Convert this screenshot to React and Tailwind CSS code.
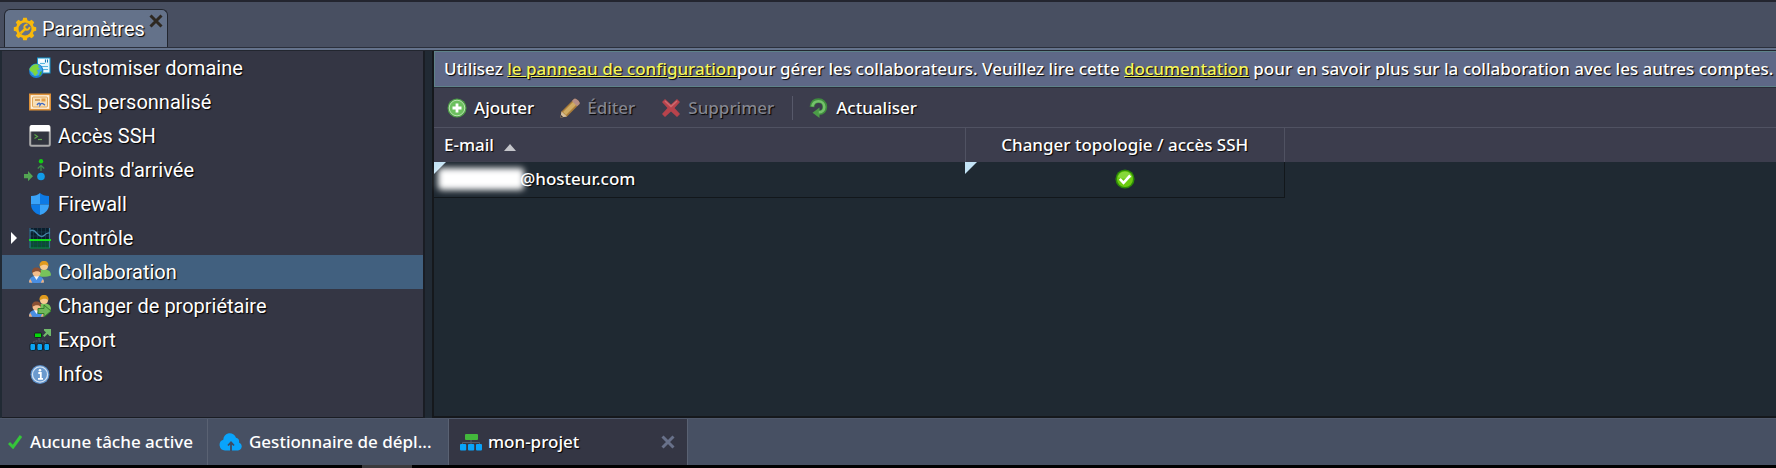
const SHADOW = "[text-shadow:1px_1px_1px_#000]";

function Svg({ children, box = "0 0 22 22", className = "size-[22px]" }) {
  return (
    <svg viewBox={box} className={`shrink-0 ${className}`} aria-hidden="true">
      {children}
    </svg>
  );
}

function GearIcon() {
  return (
    <Svg box="0 0 24 24" className="size-6">
      <g fill="#f9b90a">
        {[0, 45, 90, 135, 180, 225, 270, 315].map((a) => (
          <path key={a} d="M9.200 4.500L10.200 0.800h3.600l1 3.700z" transform={`rotate(${a} 12 12)`} />
        ))}
      </g>
      <circle cx="12" cy="12" r="7.800" fill="none" stroke="#f9b90a" strokeWidth="2.600" />
      <path d="M8.300 15.700l3.900-3.900" stroke="#f9b90a" strokeWidth="2.600" strokeLinecap="round" />
      <path d="M14.600 7.600a2.600 2.600 0 1 0 1.900 2.200" fill="none" stroke="#f9b90a" strokeWidth="1.900" />
    </Svg>
  );
}

function DomainIcon() {
  return (
    <Svg>
      <rect x="8" y="0.500" width="13.500" height="16" fill="#1596cf" />
      <rect x="9" y="1.500" width="11.500" height="14" fill="#e4f5fc" />
      <path d="M11 3.500h4" stroke="#fff" strokeWidth="2.400" />
      <path d="M11 6.500h5M11 9.500h8M11 12.500h8" stroke="#58b7dd" strokeWidth="1" />
      <path d="M16.500 2.500v3M18.500 2.500v3" stroke="#1779b4" strokeWidth="1" />
      <circle cx="7.200" cy="13.800" r="7.200" fill="#1c7fd0" />
      <circle cx="7" cy="13" r="6" fill="#3ea6ea" />
      <path d="M3 9c2-2 5-2.500 7-1l-1 2 2 2-3 1 1 3-3 3c-2-1-1-3-3-4s-3-2-2.500-3.500z" fill="#7ed63d" />
      <path d="M11 15l2-1-1 4-2 1z" fill="#4fb52b" />
    </Svg>
  );
}

function CertificateIcon() {
  return (
    <Svg>
      <rect x="0.800" y="3.300" width="20.400" height="15.400" fill="#fdf0da" stroke="#dd9138" strokeWidth="1.600" />
      <rect x="3.500" y="6" width="15" height="10" rx="1" fill="#f8dfb6" stroke="#e0a75c" strokeWidth="1" />
      <path d="M6 9h5" stroke="#c9873a" strokeWidth="1.400" />
      <rect x="12.500" y="7.500" width="4" height="3" fill="#e2a04a" />
      <path d="M8 14c2-3 3-2 3 0 2-3 3-1 5 0" fill="none" stroke="#3d68c4" strokeWidth="1.400" />
    </Svg>
  );
}

function TerminalIcon() {
  return (
    <Svg>
      <rect x="1.200" y="1.200" width="19.600" height="19.600" rx="1.500" fill="#32353f" stroke="#aaa" strokeWidth="2" />
      <path d="M1 1.500a1.500 1.500 0 0 1 1.500-1.500h17a1.500 1.500 0 0 1 1.500 1.500V6.500H1z" fill="#fff" />
      <path d="M5.500 9.500l3 2-3 2" fill="none" stroke="#5aa648" strokeWidth="1.200" />
      <path d="M9 14.500h4" stroke="#5aa648" strokeWidth="1.200" />
    </Svg>
  );
}

function EndpointsIcon() {
  return (
    <Svg box="0 0 27 22" className="h-[22px] w-[27px]">
      <path d="M0 15h4v-3l5 5.200-5 5v-3H0z" fill="#53a552" />
      <circle cx="17" cy="2.200" r="2.200" fill="#12d012" />
      <path d="M17 12V7M13.800 9.500L17 6.300l3.200 3.200" fill="none" stroke="#3f8f4b" strokeWidth="1.300" />
      <circle cx="17" cy="17.500" r="3.800" fill="#119ce8" />
    </Svg>
  );
}

function ShieldIcon() {
  return (
    <Svg>
      <path d="M11 0v11.500H2V3C6 3 9 2 11 0z" fill="#3aa3f8" />
      <path d="M11 0v11.500h9V3c-4 0-7-1-9-3z" fill="#0d7ae5" />
      <path d="M11 22V11.500H2c0 5 3.500 9 9 10.500z" fill="#0d7ae5" />
      <path d="M11 22V11.500h9c0 5-3.500 9-9 10.500z" fill="#3aa3f8" />
    </Svg>
  );
}

function MonitorIcon() {
  return (
    <Svg>
      <rect x="0.500" y="1" width="20.500" height="20" fill="#0b1d2c" />
      <rect x="0.500" y="13" width="20.500" height="8.500" fill="#07502f" />
      <path d="M4.500 1v20M8.500 1v20M12.500 1v20M16.500 1v20M1 5h20M1 9h20M1 17h20" stroke="#1c4455" strokeWidth="0.600" />
      <path d="M1 21V1M20.500 21V1" stroke="#397194" strokeWidth="1.200" />
      <path d="M1 4c3-2 5 0 7 2.500s5 4 7 2 4-3 6-2.500" fill="none" stroke="#4284a9" strokeWidth="1.400" />
      <path d="M0 13h22" stroke="#12f019" strokeWidth="1.800" />
      <path d="M1 21h20" stroke="#0f8b4a" strokeWidth="1" />
    </Svg>
  );
}

function PeopleShapes() {
  return (
    <>
      <path d="M8.500 15c0-5 2.500-6.500 6.500-6.500S22 10 22 14.500c-3 1.500-10 1.800-13.500.5z" fill="#78c25b" />
      <circle cx="15" cy="5" r="4" fill="#f7cb91" />
      <path d="M10.600 5.500C10 2 12 0 15 0s5 2 4.400 5.500C18 3.500 14 3 10.600 5.500z" fill="#e09a1d" />
      <path d="M0 21.500c0-5 3-6.500 7.500-6.500s7.500 1.500 7.500 6.500c-4 .7-11 .7-15 0z" fill="#4a8fe3" />
      <path d="M5 15l2.500 4 2.500-4z" fill="#f2f5fa" />
      <path d="M0 21.600c0-1.600.5-2.600 1.300-3.600l2 3.800zM15 21.600c0-1.600-.5-2.600-1.300-3.600l-2 3.800z" fill="#f0b07c" />
      <circle cx="7.500" cy="11.500" r="4" fill="#f3bd8c" />
      <path d="M3.100 12C2.500 8.500 4.500 6.500 7.500 6.500s5 2 4.400 5.500C10.500 10 6.500 9.500 3.100 12z" fill="#8a5034" />
    </>
  );
}

function PeopleIcon() {
  return (
    <Svg>
      <PeopleShapes />
    </Svg>
  );
}

function TransferIcon() {
  return (
    <Svg>
      <PeopleShapes />
      <path d="M9 13.500h6V10l7 6-7 6v-3.500H9z" fill="#6fb95a" stroke="#357f2c" strokeWidth="1" />
    </Svg>
  );
}

function ExportIcon() {
  return (
    <Svg>
      <rect x="5.500" y="4" width="7" height="4.500" rx="1" fill="#06d60a" stroke="#101418" strokeWidth="0.800" />
      <path d="M10 9v2.500M4 13.500l2-1.500h9l2 1.500" fill="none" stroke="#5a6270" strokeWidth="1" strokeDasharray="2 1" />
      <g fill="#0ba5f5" stroke="#101418" strokeWidth="0.800">
        <rect x="1" y="14.500" width="5.500" height="7" rx="1.500" />
        <rect x="8" y="14.500" width="5.500" height="7" rx="1.500" />
        <rect x="15" y="14.500" width="5.500" height="7" rx="1.500" />
      </g>
      <path d="M14 6.500l3-3L15 1.500V0h7v7h-1.500l-2-2-3 3z" fill="#71b96b" />
    </Svg>
  );
}

function InfoIcon() {
  return (
    <Svg>
      <circle cx="11" cy="11.500" r="9.500" fill="#5b8fc9" />
      <circle cx="11" cy="11.500" r="7.600" fill="#6b9ace" stroke="#d5e3f2" strokeWidth="1.300" />
      <path d="M9.300 10h2.500v5.500M9 15.800h5" fill="none" stroke="#fff" strokeWidth="1.800" />
      <circle cx="11" cy="7.300" r="1.300" fill="#fff" />
    </Svg>
  );
}

function AddIcon() {
  return (
    <Svg box="0 0 20 20" className="size-5">
      <circle cx="10" cy="10" r="9.500" fill="#4f9d49" />
      <circle cx="10" cy="10" r="7.800" fill="#6cc05e" stroke="#b9e3b0" strokeWidth="1" />
      <path d="M10 5.500v9M5.500 10h9" stroke="#fff" strokeWidth="2.800" />
    </Svg>
  );
}

function PencilIcon() {
  return (
    <Svg box="0 0 20 20" className="size-5">
      <path d="M0.500 19.500L1.500 13.500 14 1c1.500-1.500 6.500 2.500 5.500 5L7 18.500z" fill="#a97c3a" />
      <path d="M3 14L14 3l3 3L6 17z" fill="#d0ab62" />
      <path d="M14 1c1.500-1.500 6.500 2.500 5.500 5L17 8.300 12 3z" fill="#b58e86" />
      <path d="M1.500 13.500L7 18.500l-6.500 1z" fill="#d6bf9a" />
      <path d="M.500 19.500l.6-2.600 2 2.100z" fill="#3a3434" />
    </Svg>
  );
}

function DeleteIcon() {
  return (
    <Svg box="0 0 20 20" className="size-5">
      <path d="M4 1l6 5.500L16 1l3 3-5.500 6 5.500 6-3 3-6-5.500L4 19l-3-3 5.500-6L1 4z" fill="#b8434c" />
      <path d="M4 3l6 5.500L16 3" fill="none" stroke="#cd6b70" strokeWidth="1.500" />
    </Svg>
  );
}

function RefreshIcon() {
  return (
    <Svg box="0 0 20 20" className="size-5">
      <path d="M3 9C3.500 5 6 2.700 9.500 2.700c3.700 0 6.300 2.600 6.300 6.200 0 3.400-2.300 5.800-5.800 5.800" fill="none" stroke="#3f8d3e" strokeWidth="4.800" />
      <path d="M10.500 9.500V20l-7-5.300z" fill="#4b9c47" />
      <path d="M3.300 8.500C4 5 6.500 3.200 9.500 3.200c3.300 0 5.800 2.400 5.800 5.700 0 3.100-2.300 5.300-5.500 5.300" fill="none" stroke="#74c16b" strokeWidth="2.600" />
    </Svg>
  );
}

function EnabledIcon() {
  return (
    <svg viewBox="0 0 20 20" className="mx-auto size-5" role="img" aria-label="Oui">
      <circle cx="10" cy="10" r="9.600" fill="#2c8a08" />
      <circle cx="10" cy="10" r="8" fill="#6ccb10" />
      <path d="M3 8a7.300 7.300 0 0 1 14 0c-4 2-10 2-14 0z" fill="#86d83a" />
      <path d="M4.800 9.800l3.700 4 6.700-7.300" fill="none" stroke="#fff" strokeWidth="2.600" />
    </svg>
  );
}

function TaskIcon() {
  return (
    <Svg box="0 0 14 14" className="size-[14px]">
      <path d="M1 8l4 4L13 1" fill="none" stroke="#35c53a" strokeWidth="3" />
    </Svg>
  );
}

function CloudIcon() {
  return (
    <Svg box="0 0 24 18" className="h-[18px] w-6">
      <path d="M6 17.500a5.500 5.500 0 0 1-1.700-10.700A6.500 6.500 0 0 1 17 4.800a4 4 0 0 1 3 4.600 4.200 4.200 0 0 1-1 8.100z" fill="#09a4fb" />
      <path d="M12 18v-8M9 12.500l3-3.200 3 3.200" fill="none" stroke="#3f4b62" strokeWidth="1.800" />
    </Svg>
  );
}

function TopologyIcon() {
  return (
    <Svg box="0 0 22 18" className="h-[18px] w-[22px]">
      <rect x="5" y="1" width="13" height="6" rx="1" fill="#43b83c" />
      <path d="M11 7v4M2.500 12V9.500h17V12" fill="none" stroke="#565b6b" strokeWidth="1" />
      <rect x="0" y="11" width="6.200" height="6.500" rx="1" fill="#09a4fb" />
      <rect x="8" y="11" width="6.200" height="6.500" rx="1" fill="#09a4fb" />
      <rect x="16" y="11" width="6" height="6.500" rx="1" fill="#09a4fb" />
    </Svg>
  );
}

function CloseIcon({ className }) {
  return (
    <Svg box="0 0 14 14" className={className}>
      <path d="M1.500 1.500l11 11M12.500 1.500l-11 11" stroke="currentColor" strokeWidth="3" />
    </Svg>
  );
}

const MENU = [
  { label: "Customiser domaine", Icon: DomainIcon },
  { label: "SSL personnalisé", Icon: CertificateIcon },
  { label: "Accès SSH", Icon: TerminalIcon },
  { label: "Points d'arrivée", Icon: EndpointsIcon },
  { label: "Firewall", Icon: ShieldIcon },
  { label: "Contrôle", Icon: MonitorIcon, expandable: true },
  { label: "Collaboration", Icon: PeopleIcon, active: true },
  { label: "Changer de propriétaire", Icon: TransferIcon },
  { label: "Export", Icon: ExportIcon },
  { label: "Infos", Icon: InfoIcon },
];

function Sidebar() {
  return (
    <nav className="w-[423px] shrink-0 border-r-2 border-b border-[#1a1d24] bg-[#343644]">
      <ul>
        {MENU.map(({ label, Icon, active, expandable }) => (
          <li key={label}>
            <a
              href="#"
              aria-current={active ? "page" : undefined}
              className={`flex h-[34px] items-center font-[Roboto,sans-serif] text-[20px] leading-6 text-white ${SHADOW} ${active ? "bg-[#41607f]" : ""}`}
            >
              <span className="flex w-[49px] shrink-0 items-center justify-end">
                {expandable && (
                  <svg viewBox="0 0 6 12" className="mr-3 h-3 w-[6px]" aria-hidden="true">
                    <path d="M0 0l6 6-6 6z" fill="#fff" />
                  </svg>
                )}
                <Icon />
              </span>
              <span className="ml-[7px]">{label}</span>
            </a>
          </li>
        ))}
      </ul>
    </nav>
  );
}

function ToolButton({ icon, label, disabled }) {
  return (
    <button
      type="button"
      disabled={disabled}
      className={`flex items-center gap-[7px] ${disabled ? "text-[#858690]" : "text-white"} ${SHADOW}`}
    >
      {icon}
      {label}
    </button>
  );
}

function Corner() {
  return (
    <svg viewBox="0 0 12 12" className="absolute top-0 left-0 size-3" aria-hidden="true">
      <path d="M0 0h12L0 12z" fill="#c3e3f5" />
    </svg>
  );
}

export default function App() {
  return (
    <div className="flex min-h-screen flex-col border-t-2 border-[#23252f] bg-black font-['Noto_Sans',sans-serif] font-medium text-white">
      <header className="flex h-[46px] items-end border-b border-[#2b303c] bg-[#484f61] px-1">
        <div className="flex h-[38px] items-center rounded-t-md border border-b-0 border-[#22262f] bg-[#64728a] pr-1 pl-2">
          <GearIcon />
          <span className={`ml-[5px] font-[Roboto,sans-serif] text-[20px] leading-6 font-normal ${SHADOW}`}>Paramètres</span>
          <button type="button" aria-label="Fermer Paramètres" className="mb-4 ml-1 text-[#2e2821]">
            <CloseIcon className="size-[14px]" />
          </button>
        </div>
      </header>
      <div className="h-[3px] border-b border-[#22262f] bg-[#65738c]" />

      <div className="flex grow bg-[#212a34] pl-[2px] font-normal">
        <Sidebar />
        <main className={`ml-[7px] flex min-w-0 grow flex-col border-b-2 border-l-2 border-[#15181c] bg-[#1f2932] text-[17px] leading-6 font-medium ${SHADOW}`}>
          <p className="flex min-h-9 items-center border border-r-0 border-[#5e8289] bg-[#5e6887] pl-[9px]">
            <span>
              Utilisez{" "}
              <a href="#" className="text-[#f5f55a] underline">le panneau de configuration</a>
              pour gérer les collaborateurs. Veuillez lire cette{" "}
              <a href="#" className="text-[#f5f55a] underline">documentation</a>{" "}
              pour en savoir plus sur la collaboration avec les autres comptes.
            </span>
          </p>
          <div className="flex h-10 items-center border-t border-[#2a2c38] bg-[#3c3d4d] pl-[13px]">
            <ToolButton icon={<AddIcon />} label="Ajouter" />
            <span className="w-[26px]" />
            <ToolButton icon={<PencilIcon />} label="Éditer" disabled />
            <span className="w-[26px]" />
            <ToolButton icon={<DeleteIcon />} label="Supprimer" disabled />
            <span className="mr-4 ml-[18px] h-6 w-px bg-[#57596a]" />
            <ToolButton icon={<RefreshIcon />} label="Actualiser" />
          </div>
          <div className="border-t border-[#505262] bg-[linear-gradient(#3c3d4d_34px,#1f2932_34px)]">
            <table className="w-[851px] table-fixed border-collapse">
              <thead>
                <tr className="h-[34px]">
                  <th scope="col" className="w-[531px] border-r border-[#505262] p-0 pl-[10px] text-left font-medium">
                    <span className="flex items-center gap-[10px]">
                      E-mail
                      <svg viewBox="0 0 12 7" className="mt-1 h-[7px] w-3" aria-hidden="true">
                        <path d="M6 0l6 7H0z" fill="#c5c6cb" />
                      </svg>
                    </span>
                  </th>
                  <th scope="col" className="border-r border-[#505262] p-0 text-center font-medium">
                    Changer topologie / accès SSH
                  </th>
                </tr>
              </thead>
              <tbody>
                <tr className="h-[35px] border-b border-[#12171b]">
                  <td className="relative p-0">
                    <Corner />
                    <span className="flex items-center">
                      <span className="-mr-1 ml-1 h-[22px] w-[86px] rounded-sm bg-white blur-[3px]" />
                      <span>@hosteur.com</span>
                    </span>
                  </td>
                  <td className="relative border-r border-[#12171b] p-0">
                    <Corner />
                    <EnabledIcon />
                  </td>
                </tr>
              </tbody>
            </table>
          </div>
        </main>
      </div>

      <footer>
        <div className={`flex h-[47px] items-stretch border-t border-[#4f586b] bg-[#475063] text-[17px] leading-6 ${SHADOW}`}>
          <button type="button" className="flex w-[208px] items-center gap-2 border-r border-[#5a6273] pl-2">
            <TaskIcon />
            Aucune tâche active
          </button>
          <button type="button" className="flex w-[241px] items-center gap-[6px] border-r border-[#5a6273] pl-[11px]">
            <CloudIcon />
            Gestionnaire de dépl...
          </button>
          <div className="flex w-[239px] items-center border-r border-[#5a6273] bg-[#343644] pr-3 pl-[11px]">
            <TopologyIcon />
            <span className="ml-[6px] grow">mon-projet</span>
            <button type="button" aria-label="Fermer mon-projet" className="text-[#68718a]">
              <CloseIcon className="size-[14px]" />
            </button>
          </div>
        </div>
        <div className="h-[3px] bg-black pl-[362px]">
          <div className="h-full w-[50px] bg-[#3a3a3c]" />
        </div>
      </footer>
    </div>
  );
}
